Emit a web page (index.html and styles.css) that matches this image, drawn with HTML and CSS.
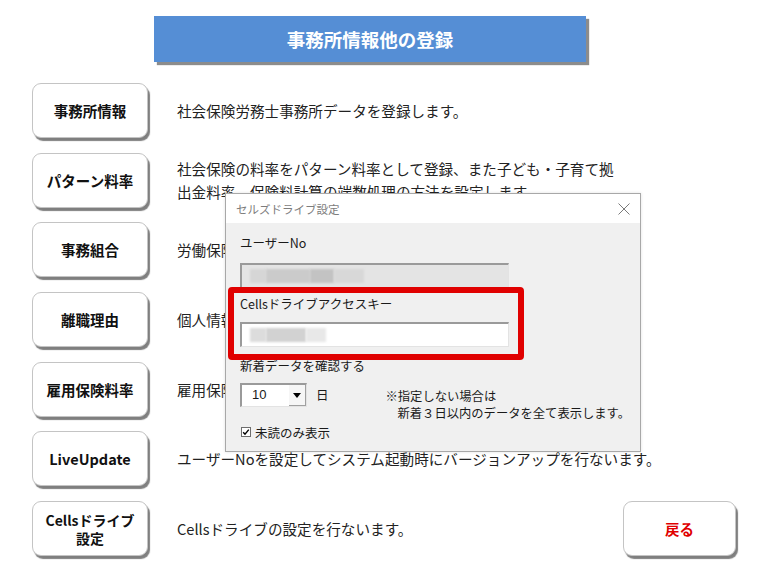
FILE: index.html
```html
<!DOCTYPE html>
<html lang="ja">
<head>
<meta charset="utf-8">
<title>事務所情報他の登録</title>
<link rel="stylesheet" href="styles.css">
</head>
<body>
<div class="page">
  <div class="header">事務所情報他の登録</div>
  <div class="rows">
    <div class="row"><div class="btn">事務所情報</div><p class="desc">社会保険労務士事務所データを登録します。</p></div>
    <div class="row"><div class="btn">パターン料率</div><p class="desc">社会保険の料率をパターン料率として登録、また子ども・子育て拠<br>出金料率、保険料計算の端数処理の方法を設定します。</p></div>
    <div class="row"><div class="btn">事務組合</div><p class="desc">労働保険事務組合のデータを登録します。</p></div>
    <div class="row"><div class="btn">離職理由</div><p class="desc">個人情報の離職理由を登録します。</p></div>
    <div class="row"><div class="btn">雇用保険料率</div><p class="desc">雇用保険料率を登録します。</p></div>
    <div class="row"><div class="btn latin">LiveUpdate</div><p class="desc">ユーザーNoを設定してシステム起動時にバージョンアップを行ないます。</p></div>
    <div class="row"><div class="btn two">Cellsドライブ<br>設定</div><p class="desc">Cellsドライブの設定を行ないます。</p><div class="btn back">戻る</div></div>
  </div>

  <div class="dialog">
    <div class="titlebar">
      <span class="title">セルズドライブ設定</span>
      <svg class="close" width="12" height="12" viewBox="0 0 12 12"><path d="M0.5 0.5L11.5 11.5M11.5 0.5L0.5 11.5" stroke="#7a7a7a" stroke-width="1" fill="none"/></svg>
    </div>
    <div class="dbody">
      <div class="label l1">ユーザーNo</div>
      <div class="field disabled">
        <span class="blur b1"></span><span class="blur b2"></span><span class="blur b3"></span><span class="blur b4"></span>
      </div>
      <div class="label l2">Cellsドライブアクセスキー</div>
      <div class="field">
        <span class="blur c1"></span><span class="blur c2"></span><span class="blur c3"></span>
      </div>
      <div class="label l3">新着データを確認する</div>
      <div class="comborow">
        <div class="combo"><span class="val">10</span><span class="arrow"><svg width="8" height="5" viewBox="0 0 8 5"><path d="M0 0H8L4 5Z" fill="#000"/></svg></span></div>
        <span class="day">日</span>
        <div class="note">※指定しない場合は<br><span class="indent">新着３日以内のデータを全て表示します。</span></div>
      </div>
      <div class="checkrow">
        <svg class="cb" width="10" height="10" viewBox="0 0 10 10"><rect x="0.5" y="0.5" width="9" height="9" fill="#fff" stroke="#6e6e6e"/><path d="M2.2 5.2L4 7.2L7.8 2.6" stroke="#000" stroke-width="1.4" fill="none"/></svg>
        <span>未読のみ表示</span>
      </div>
      <div class="redbox"></div>
    </div>
  </div>
</div>
</body>
</html>
```
FILE: styles.css
```css
html, body {
  margin: 0;
  padding: 0;
  background: #ffffff;
}
body {
  font-family: "Noto Sans CJK JP", "Noto Sans", sans-serif;
  color: #1e1e1e;
}
.page {
  position: relative;
  width: 774px;
  height: 581px;
  padding-top: 16px;
  box-sizing: border-box;
  overflow: hidden;
}
.header {
  margin-left: 154px;
  width: 432px;
  height: 46px;
  background: #558ed5;
  color: #ffffff;
  font-weight: bold;
  font-size: 18.5px;
  display: flex;
  align-items: center;
  justify-content: center;
  box-shadow: 3px 3px 1px rgba(0, 0, 0, 0.45);
}
.rows {
  margin-top: 21px;
  margin-left: 32px;
  display: grid;
  grid-auto-rows: 55px;
  row-gap: 14.7px;
}
.row {
  display: flex;
  align-items: center;
}
.btn {
  width: 116px;
  height: 55px;
  box-sizing: border-box;
  border: 1px solid #c4c4c4;
  border-radius: 9px;
  background: #ffffff;
  box-shadow: 2px 3px 1px rgba(0, 0, 0, 0.5);
  display: flex;
  align-items: center;
  justify-content: center;
  text-align: center;
  font-weight: bold;
  font-size: 14.5px;
  color: #111;
  flex-shrink: 0;
}
.btn.two {
  line-height: 18px;
  font-size: 14px;
}
.btn.latin {
  font-size: 14.5px;
}
.desc {
  margin: 0 0 0 29px;
  font-size: 14.6px;
  line-height: 23px;
  color: #222;
}
.btn.back {
  margin-left: auto;
  margin-right: 38px;
  width: 113px;
  color: #e00000;
}

/* dialog */
.dialog {
  position: absolute;
  left: 225px;
  top: 193px;
  width: 416px;
  height: 259px;
  box-sizing: border-box;
  border: 1px solid #a8a8a8;
  background: #f0f0f0;
  box-shadow: 0 0 3px rgba(0, 0, 0, 0.12);
  z-index: 5;
}
.titlebar {
  height: 29px;
  background: #ffffff;
  display: flex;
  align-items: center;
  padding: 0 10px 0 10px;
}
.title {
  font-size: 11.5px;
  color: #7d7d7d;
}
.close {
  margin-left: auto;
  margin-right: 0;
}
.dbody {
  position: relative;
  padding: 0 14px;
  font-size: 12.5px;
  color: #1a1a1a;
}
.label {
  line-height: 20px;
  height: 20px;
}
.l1 { padding-top: 10px; }
.l2 { margin-top: 6px; }
.l3 { margin-top: 9px; position: relative; }
.field {
  margin-top: 10px;
  width: 269px;
  height: 25px;
  box-sizing: border-box;
  border-top: 2px solid #9a9a9a;
  border-left: 2px solid #9a9a9a;
  border-right: 1px solid #e3e3e3;
  border-bottom: 1px solid #e3e3e3;
  background: #ffffff;
  display: flex;
  align-items: center;
  padding-left: 8px;
}
.l2 + .field { margin-top: 8px; }
.field.disabled {
  background: #e4e4e4;
}
.blur {
  display: inline-block;
  height: 14px;
  filter: blur(1px);
}
.b1 { width: 16px; background: #d6d6d6; }
.b2 { width: 44px; background: #cbcbcb; }
.b3 { width: 24px; background: #c3c3c3; }
.b4 { width: 30px; background: #d8d8d8; }
.c1 { width: 16px; background: #dcdcdc; }
.c2 { width: 40px; background: #d2d2d2; }
.c3 { width: 20px; background: #e8e8e8; }
.comborow {
  margin-top: 7px;
  display: flex;
  align-items: flex-start;
}
.combo {
  width: 67px;
  height: 24px;
  box-sizing: border-box;
  border-top: 2px solid #9a9a9a;
  border-left: 2px solid #9a9a9a;
  border-right: 1px solid #e3e3e3;
  border-bottom: 1px solid #e3e3e3;
  background: #ffffff;
  display: flex;
  align-items: stretch;
  flex-shrink: 0;
}
.val {
  flex: 1;
  padding-left: 10px;
  line-height: 20px;
  font-family: "Liberation Sans", "Noto Sans", sans-serif;
  font-size: 13px;
}
.arrow {
  width: 16px;
  background: #f6f6f6;
  border-right: 1px solid #a0a0a0;
  border-bottom: 1px solid #a0a0a0;
  display: flex;
  align-items: center;
  justify-content: center;
}
.day {
  margin-left: 9px;
  line-height: 24px;
  flex-shrink: 0;
}
.note {
  margin-left: 57px;
  margin-top: 5px;
  line-height: 17px;
  white-space: nowrap;
  flex-shrink: 0;
  font-size: 12.3px;
}
.indent { padding-left: 12px; }
.checkrow {
  display: flex;
  align-items: center;
  height: 20px;
  gap: 4px;
  padding-left: 1px;
}
.redbox {
  position: absolute;
  left: 2px;
  top: 64px;
  width: 296px;
  height: 73px;
  box-sizing: border-box;
  border: 6px solid #e00000;
  border-radius: 4px;
  z-index: 3;
}
```
